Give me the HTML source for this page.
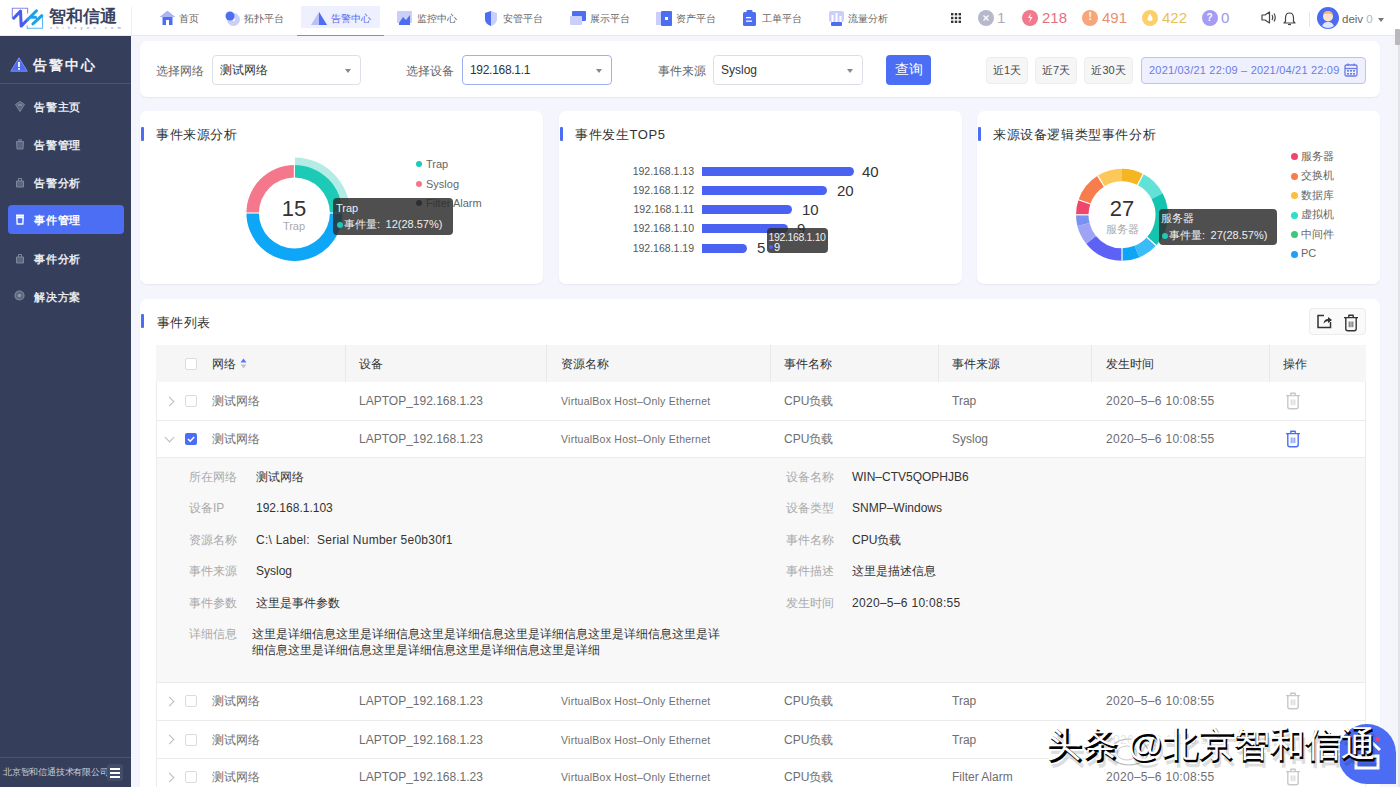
<!DOCTYPE html>
<html><head><meta charset="utf-8">
<style>
*{box-sizing:border-box;margin:0;padding:0}
html,body{width:1400px;height:787px;overflow:hidden}
body{font-family:"Liberation Sans",sans-serif;background:#f4f5fd;position:relative;color:#333}
.abs{position:absolute}
.hdr{left:0;top:0;width:1400px;height:35px;background:#fff}
.side{left:0;top:36px;width:131px;height:751px;background:#353f5b}
.card{position:absolute;background:#fff;border-radius:7px;box-shadow:0 1px 2px rgba(0,0,0,0.06)}
.t{position:absolute;white-space:nowrap;line-height:1}
.nav{position:absolute;top:1px;height:35px;font-size:10.2px;color:#666;line-height:35px;white-space:nowrap}
.menu{position:absolute;left:34px;font-size:11px;letter-spacing:0.8px;color:#e9ebf0;font-weight:bold;line-height:1;white-space:nowrap}
.sel{position:absolute;top:55px;height:30px;border:1px solid #dcdfe6;border-radius:4px;background:#fff;font-size:12px;color:#333;line-height:29px;padding-left:7px}
.caret{position:absolute;right:9px;top:13px;width:0;height:0;border-left:3.5px solid transparent;border-right:3.5px solid transparent;border-top:4px solid #888}
.lbl{position:absolute;top:64.5px;font-size:12px;color:#666;line-height:1}
.qb{position:absolute;top:57px;height:27px;background:#f6f6f7;border:1px solid #ededed;border-radius:4px;font-size:11px;color:#4a4a4a;line-height:25px;text-align:center}
.ttl{position:absolute;font-size:13px;letter-spacing:0.6px;color:#333;line-height:1;white-space:nowrap;font-weight:500}
.bar{position:absolute;width:3px;height:14px;background:#4c6ef5;border-radius:1px}
.th{position:absolute;font-size:12px;font-weight:500;color:#333;line-height:1;white-space:nowrap}
.td{position:absolute;font-size:12px;color:#6e6e6e;line-height:1;white-space:nowrap}
.dl{position:absolute;font-size:12px;color:#aaa;line-height:1;white-space:nowrap}
.dv{position:absolute;font-size:12px;color:#333;line-height:1;white-space:nowrap}
.hl{position:absolute;left:156px;width:1210px;height:1px;background:#ebebeb}
.cb{position:absolute;left:185px;width:12px;height:12px;border:1px solid #dcdcdc;border-radius:2px;background:#fff}
.chev{position:absolute;left:166px;width:7px;height:7px;border-right:1px solid #bbb;border-top:1px solid #bbb;transform:rotate(45deg)}
</style></head><body>
<!-- header -->
<div class="abs hdr"></div>
<div class="abs" style="left:131px;top:7px;width:1px;height:28px;background:#eee"></div>
<div class="abs" style="left:0;top:35px;width:1400px;height:1px;background:#e8e9f0"></div>


<!-- logo -->
<svg class="abs" style="left:8px;top:4px" width="40" height="28" viewBox="8 4 40 28">
 <path d="M12.3 18.2 V8.3 H27.6 V13.6" fill="none" stroke="#8a86ee" stroke-width="1.1"/>
 <path d="M42.5 15.7 V28.2 H27.2 V25.4" fill="none" stroke="#58b8ef" stroke-width="1.1"/>
 <path d="M13.7 18.2 L20.5 11.1 L21.2 26.1 L27.9 19.3" fill="none" stroke="#4a5cf0" stroke-width="3" stroke-linejoin="round" stroke-linecap="round"/>
 <path d="M27.9 19.3 L36.5 10.8 M32.9 23.9 L41.8 15.7 M31 17.3 H35.5" fill="none" stroke="#1aa3ea" stroke-width="3" stroke-linecap="round"/>
</svg>
<div class="t" style="left:49px;top:8px;font-size:17px;font-weight:bold;color:#3b4260;letter-spacing:0px">智和信通</div>
<div class="t" style="left:50px;top:26px;font-size:4px;color:#7b83e8;letter-spacing:4.2px">zhiheyou.com</div>

<!-- nav -->
<svg class="abs" style="left:160px;top:11px" width="15" height="14" viewBox="0 0 15 14"><path d="M7.5 0 L15 6 L12.5 6 L12.5 14 L2.5 14 L2.5 6 L0 6 Z" fill="#4e6ef2"/><path d="M7.5 0 L15 6 L0 6 Z" fill="#aab6f7"/><rect x="6" y="9" width="3" height="5" fill="#fff"/></svg>
<div class="nav" style="left:179px">首页</div>
<svg class="abs" style="left:225px;top:11px" width="15" height="15" viewBox="0 0 15 15"><circle cx="8.5" cy="8.5" r="6.5" fill="#c9cffa"/><circle cx="5" cy="5" r="4.5" fill="#4e6ef2"/><path d="M8 10 L10 8" stroke="#fff" stroke-width="1.2"/></svg>
<div class="nav" style="left:244px">拓扑平台</div>
<div class="abs" style="left:301px;top:6px;width:79px;height:22px;background:#eff0fd"></div>
<div class="abs" style="left:297px;top:34.5px;width:87px;height:1.5px;background:#5b9fda"></div>
<svg class="abs" style="left:311px;top:12px" width="16" height="13" viewBox="0 0 16 13"><path d="M8 0 L16 13 L0 13 Z" fill="#b7c0f8"/><path d="M8 0 L16 13 L8 13 Z" fill="#4e6ef2"/></svg>
<div class="nav" style="left:331px;color:#5568ef">告警中心</div>
<svg class="abs" style="left:397px;top:11px" width="15" height="14" viewBox="0 0 15 14"><rect x="0" y="0" width="15" height="12" rx="1" fill="#c9cffa"/><path d="M2 12 L6 6 L9 9 L13 4 L13 14 L2 14 Z" fill="#4e6ef2"/></svg>
<div class="nav" style="left:417px">监控中心</div>
<svg class="abs" style="left:484px;top:11px" width="14" height="15" viewBox="0 0 14 15"><path d="M1 2 L7 0 L13 2 L13 8 Q13 13 7 15 Q1 13 1 8 Z" fill="#c9cffa"/><path d="M1 2 L7 0 L7 15 Q1 13 1 8 Z" fill="#4e6ef2"/></svg>
<div class="nav" style="left:503px">安管平台</div>
<svg class="abs" style="left:570px;top:11px" width="16" height="14" viewBox="0 0 16 14"><rect x="2" y="0" width="14" height="10" rx="1" fill="#4e6ef2"/><rect x="0" y="5" width="12" height="9" rx="1" fill="#c9cffa"/></svg>
<div class="nav" style="left:590px">展示平台</div>
<svg class="abs" style="left:656px;top:11px" width="16" height="15" viewBox="0 0 16 15"><rect x="0" y="1" width="10" height="13" fill="#c9cffa"/><rect x="5" y="0" width="11" height="15" rx="1" fill="#4e6ef2"/><rect x="9" y="6" width="3" height="3" fill="#fff"/></svg>
<div class="nav" style="left:676px">资产平台</div>
<svg class="abs" style="left:743px;top:10px" width="13" height="16" viewBox="0 0 13 16"><rect x="0" y="2" width="13" height="14" rx="1.5" fill="#4e6ef2"/><rect x="3.5" y="0" width="6" height="3" rx="1" fill="#4e6ef2"/><rect x="3" y="7" width="5" height="1.3" fill="#fff"/><rect x="3" y="10.5" width="6" height="1.3" fill="#fff"/></svg>
<div class="nav" style="left:762px">工单平台</div>
<svg class="abs" style="left:829px;top:11px" width="15" height="15" viewBox="0 0 15 15"><rect x="0" y="0" width="15" height="11" rx="2" fill="#c9cffa"/><rect x="2.5" y="4" width="2" height="7" fill="#fff"/><rect x="6.5" y="2" width="2" height="9" fill="#fff"/><rect x="10.5" y="5" width="2" height="6" fill="#fff"/><rect x="2" y="11" width="11" height="4" rx="1" fill="#4e6ef2"/></svg>
<div class="nav" style="left:848px">流量分析</div>

<!-- right header -->
<svg class="abs" style="left:951px;top:13px" width="10" height="10" viewBox="0 0 10 10" fill="#333"><rect x="0" y="0" width="2.4" height="2.4"/><rect x="3.8" y="0" width="2.4" height="2.4"/><rect x="7.6" y="0" width="2.4" height="2.4"/><rect x="0" y="3.8" width="2.4" height="2.4"/><rect x="3.8" y="3.8" width="2.4" height="2.4"/><rect x="7.6" y="3.8" width="2.4" height="2.4"/><rect x="0" y="7.6" width="2.4" height="2.4"/><rect x="3.8" y="7.6" width="2.4" height="2.4"/><rect x="7.6" y="7.6" width="2.4" height="2.4"/></svg>
<div class="abs" style="left:978px;top:9.5px;width:16px;height:16px;border-radius:50%;background:#b7b8cb"></div>
<svg class="abs" style="left:982px;top:13.5px" width="8" height="8"><path d="M1.5 1.5 L6.5 6.5 M6.5 1.5 L1.5 6.5" stroke="#fff" stroke-width="1.3"/></svg>
<div class="t" style="left:997px;top:9.5px;font-size:15px;color:#a9abbd">1</div>
<div class="abs" style="left:1022px;top:9.5px;width:16px;height:16px;border-radius:50%;background:#f07a8c"></div>
<svg class="abs" style="left:1026px;top:12.5px" width="8" height="10"><path d="M5 0 L2 5 L4.5 5 L3 10 L6.5 4 L4 4 Z" fill="#fff"/></svg>
<div class="t" style="left:1042px;top:9.5px;font-size:15px;color:#e46f83">218</div>
<div class="abs" style="left:1082px;top:9.5px;width:16px;height:16px;border-radius:50%;background:#f7a67b"></div>
<div class="t" style="left:1088.5px;top:12px;font-size:10px;color:#fff;font-weight:bold">!</div>
<div class="t" style="left:1102px;top:9.5px;font-size:15px;color:#e49272">491</div>
<div class="abs" style="left:1142px;top:9.5px;width:16px;height:16px;border-radius:50%;background:#fbd06a"></div>
<svg class="abs" style="left:1146px;top:13px" width="8" height="9"><path d="M4 0.5 Q7 5 6.5 7 Q4 9 1.5 7 Q1 5 4 0.5Z" fill="#fff"/></svg>
<div class="t" style="left:1162px;top:9.5px;font-size:15px;color:#e8bf58">422</div>
<div class="abs" style="left:1202px;top:9.5px;width:16px;height:16px;border-radius:50%;background:#a59cf4"></div>
<div class="t" style="left:1206.5px;top:12.5px;font-size:10px;color:#fff;font-weight:bold">?</div>
<div class="t" style="left:1221px;top:9.5px;font-size:15px;color:#9d97e6">0</div>
<svg class="abs" style="left:1261px;top:11px" width="15" height="13" viewBox="0 0 15 13"><path d="M1 4 L4 4 L8.5 1 L8.5 12 L4 9 L1 9 Z" fill="none" stroke="#444" stroke-width="1.2" stroke-linejoin="round"/><path d="M11 4 Q12.5 6.5 11 9 M13 2.5 Q15.5 6.5 13 10.5" fill="none" stroke="#444" stroke-width="1.2"/></svg>
<svg class="abs" style="left:1283px;top:12px" width="13" height="14" viewBox="0 0 13 14"><path d="M6.5 1 Q10.5 1 10.5 6 L10.5 9.5 L12 11 L1 11 L2.5 9.5 L2.5 6 Q2.5 1 6.5 1 Z" fill="none" stroke="#444" stroke-width="1.2" stroke-linejoin="round"/><path d="M5 12.5 L8 12.5" stroke="#444" stroke-width="1.2"/></svg>
<div class="abs" style="left:1309px;top:12px;width:1px;height:15px;background:#e6e6e6"></div>
<svg class="abs" style="left:1317px;top:7px" width="22" height="22" viewBox="0 0 22 22"><circle cx="11" cy="11" r="11" fill="#4b6cf2"/><circle cx="11" cy="9.5" r="5" fill="#fde3cf"/><path d="M6 8 Q7 3.5 11 4 Q15 3.5 16 8 Q13 6 11 6.5 Q8 6 6 8Z" fill="#f3b46c"/><path d="M5 19 Q7 14.5 11 15 Q15 14.5 17 19 Q11 23 5 19Z" fill="#dfe6ff"/></svg>
<div class="t" style="left:1342px;top:13.5px;font-size:11.5px;color:#666">deiv <span style="color:#a9b6c9">0</span></div>
<div class="abs" style="left:1378px;top:18px;width:0;height:0;border-left:3.5px solid transparent;border-right:3.5px solid transparent;border-top:4px solid #777"></div>
<!-- scrollbar -->
<div class="abs" style="left:1391px;top:36px;width:9px;height:751px;background:#f4f5fb"></div>
<div class="abs" style="left:1398px;top:36px;width:2px;height:751px;background:#e3e4ea"></div>
<div class="abs" style="left:1395px;top:29px;width:5px;height:16px;background:#b9b9bd;border-radius:1px"></div>

<!-- sidebar -->

<div class="abs side"></div>
<svg class="abs" style="left:10px;top:57px" width="18" height="15" viewBox="0 0 18 15"><path d="M9 0.8 L17.2 14.2 L0.8 14.2 Z" fill="#4d6cf0" stroke="#7b8ff5" stroke-width="1" stroke-linejoin="round"/><rect x="8.1" y="5" width="1.8" height="5" fill="#fff"/><rect x="8.1" y="11" width="1.8" height="1.8" fill="#fff"/></svg>
<div class="t" style="left:33px;top:57.5px;font-size:14px;color:#eef0f5;letter-spacing:2px;font-weight:bold">告警中心</div>
<div class="abs" style="left:0;top:83px;width:131px;height:1px;background:#4a5573"></div>
<svg class="abs" style="left:15px;top:101px" width="10" height="11" viewBox="0 0 10 11"><path d="M5 0.5 L9.5 3.5 L5 10.5 L0.5 3.5 Z" fill="#5d667e" stroke="#7d869b" stroke-width="1"/><path d="M3 4 L7 4" stroke="#9aa2b4"/></svg>
<div class="menu" style="top:102px">告警主页</div>
<svg class="abs" style="left:15px;top:139px" width="10" height="11" viewBox="0 0 10 11"><path d="M1.5 2.5 L8.5 2.5 L8 10 L2 10 Z" fill="#5d667e" stroke="#7d869b" stroke-width="1"/><path d="M3 1 H7" stroke="#7d869b" stroke-width="1.2"/></svg>
<div class="menu" style="top:140px">告警管理</div>
<svg class="abs" style="left:15px;top:177px" width="10" height="11" viewBox="0 0 10 11"><path d="M1.5 4 L8.5 4 L8.5 10 L1.5 10 Z" fill="#5d667e" stroke="#7d869b" stroke-width="1"/><path d="M3.5 4 L3.5 1.5 L6.5 1.5 L6.5 4" fill="none" stroke="#7d869b" stroke-width="1"/></svg>
<div class="menu" style="top:178px">告警分析</div>
<div class="abs" style="left:8px;top:205px;width:116px;height:29px;background:#4c6ef5;border-radius:4px"></div>
<svg class="abs" style="left:15px;top:214px" width="10" height="11" viewBox="0 0 10 11"><path d="M1.8 3.5 L8.2 3.5 L7.8 10 L2.2 10 Z" fill="none" stroke="#fff" stroke-width="1.4"/><rect x="1" y="0.5" width="8" height="2.2" rx="0.5" fill="#fff"/></svg>
<div class="menu" style="top:215px;color:#fff">事件管理</div>
<svg class="abs" style="left:15px;top:253px" width="10" height="11" viewBox="0 0 10 11"><path d="M1.5 4 L8.5 4 L8.5 10 L1.5 10 Z" fill="#5d667e" stroke="#7d869b" stroke-width="1"/><path d="M3.5 4 L3.5 1.5 L6.5 1.5 L6.5 4" fill="none" stroke="#7d869b" stroke-width="1"/></svg>
<div class="menu" style="top:254px">事件分析</div>
<svg class="abs" style="left:14px;top:290px" width="11" height="11" viewBox="0 0 11 11"><circle cx="5.5" cy="5.5" r="4.5" fill="#5d667e" stroke="#7d869b" stroke-width="1.2"/><circle cx="5.5" cy="5.5" r="1.8" fill="#8e96a8"/></svg>
<div class="menu" style="top:292px">解决方案</div>
<div class="abs" style="left:0;top:757px;width:131px;height:1px;background:#4a5573"></div>
<div class="t" style="left:3px;top:768px;font-size:9px;color:#c9ccd6;letter-spacing:-0.2px">北京智和信通技术有限公司</div>
<div class="abs" style="left:107px;top:764px;width:16px;height:17px;background:#434d69;border-radius:3px"></div>
<div class="abs" style="left:110px;top:768px;width:10px;height:2px;background:#fff"></div>
<div class="abs" style="left:110px;top:772px;width:10px;height:2px;background:#fff"></div>
<div class="abs" style="left:110px;top:776px;width:10px;height:2px;background:#fff"></div>


<!-- filter card -->

<div class="card" style="left:140px;top:41px;width:1240px;height:56px"></div>
<div class="lbl" style="left:156px">选择网络</div>
<div class="sel" style="left:212px;width:149px">测试网络<div class="caret"></div></div>
<div class="lbl" style="left:406px">选择设备</div>
<div class="sel" style="left:462px;width:150px;border-color:#9fb0f2;letter-spacing:-0.3px">192.168.1.1<div class="caret"></div></div>
<div class="lbl" style="left:658px">事件来源</div>
<div class="sel" style="left:713px;width:150px">Syslog<div class="caret"></div></div>
<div class="abs" style="left:886px;top:55px;width:45px;height:30px;background:#4c6ef5;border-radius:4px;color:#fff;font-size:13.5px;line-height:30px;text-align:center;font-weight:500">查询</div>
<div class="qb" style="left:986px;width:42px">近1天</div>
<div class="qb" style="left:1035px;width:42px">近7天</div>
<div class="qb" style="left:1084px;width:49px">近30天</div>
<div class="abs" style="left:1141px;top:57px;width:225px;height:27px;background:#eef0fe;border:1px solid #b9c3f7;border-radius:4px;font-size:11px;color:#6b7ce6;line-height:25px;padding-left:7px;white-space:nowrap;letter-spacing:0.2px">2021/03/21 22:09 – 2021/04/21 22:09</div>
<svg class="abs" style="left:1344px;top:63px" width="14" height="14" viewBox="0 0 14 14"><rect x="1" y="2" width="12" height="11" rx="1.5" fill="none" stroke="#6b7ce6" stroke-width="1.3"/><path d="M1 5.5 H13" stroke="#6b7ce6" stroke-width="1.3"/><path d="M4 0.5 V3 M10 0.5 V3" stroke="#6b7ce6" stroke-width="1.3"/><g fill="#6b7ce6"><rect x="3" y="7" width="2" height="1.6"/><rect x="6" y="7" width="2" height="1.6"/><rect x="9" y="7" width="2" height="1.6"/><rect x="3" y="10" width="2" height="1.6"/><rect x="6" y="10" width="2" height="1.6"/><rect x="9" y="10" width="2" height="1.6"/></g></svg>

<!-- chart cards -->

<div class="card" style="left:140px;top:111px;width:403px;height:173px"></div>
<div class="bar" style="left:140.5px;top:127px"></div>
<div class="ttl" style="left:156px;top:128px">事件来源分析</div>
<svg class="abs" style="left:140px;top:111px" width="403" height="173" viewBox="140 111 403 173">
<path d="M294.98 157.40 A55.6 55.6 0 0 1 350.00 213.00 L341.90 213.00 A47.5 47.5 0 0 0 294.90 165.50 Z" fill="#b3ece4"/>
<path d="M294.40 165.00 A48 48 0 0 1 342.40 213.00 L329.90 213.00 A35.5 35.5 0 0 0 294.40 177.50 Z" fill="#1ccab6"/>
<path d="M342.40 213.00 A48 48 0 0 1 246.40 213.00 L258.90 213.00 A35.5 35.5 0 0 0 329.90 213.00 Z" fill="#0ea6f7"/>
<path d="M246.40 213.00 A48 48 0 0 1 294.40 165.00 L294.40 177.50 A35.5 35.5 0 0 0 258.90 213.00 Z" fill="#f5778b"/>
<path d="M294.40 178.50 L294.40 157.00" stroke="#fff" stroke-width="1.1"/>
<path d="M328.90 213.00 L343.40 213.00" stroke="#fff" stroke-width="1.1"/>
<path d="M259.90 213.00 L245.40 213.00" stroke="#fff" stroke-width="1.1"/>
</svg>
<div class="t" style="left:281px;top:197.5px;font-size:22px;color:#333;width:26px;text-align:center">15</div>
<div class="t" style="left:280px;top:221px;font-size:11px;color:#aaa;width:28px;text-align:center">Trap</div>
<div class="abs" style="left:416px;top:161px;width:6px;height:6px;border-radius:50%;background:#1ccab6"></div>
<div class="t" style="left:426px;top:159px;font-size:11px;color:#666">Trap</div>
<div class="abs" style="left:416px;top:180.5px;width:6px;height:6px;border-radius:50%;background:#f5778b"></div>
<div class="t" style="left:426px;top:178.5px;font-size:11px;color:#666">Syslog</div>
<div class="abs" style="left:416px;top:200px;width:6px;height:6px;border-radius:50%;background:#1b3a5c"></div>
<div class="t" style="left:426px;top:198px;font-size:11px;color:#666">Filter Alarm</div>
<div class="abs" style="left:333px;top:198px;width:120px;height:37px;background:rgba(45,45,45,0.84);border-radius:4px"></div>
<div class="t" style="left:336px;top:203px;font-size:11px;color:#eee">Trap</div>
<div class="abs" style="left:337px;top:222px;width:6px;height:6px;border-radius:50%;background:#1ccab6"></div>
<div class="t" style="left:344px;top:219px;font-size:11px;color:#eee">事件量:<span style="margin-left:5.5px">12(28.57%)</span></div>
<div class="card" style="left:559px;top:111px;width:403px;height:173px"></div>
<div class="bar" style="left:559.5px;top:127px"></div>
<div class="ttl" style="left:575px;top:128px">事件发生TOP5</div>
<div class="t" style="left:600px;top:166px;width:94px;text-align:right;font-size:10.5px;color:#555">192.168.1.13</div>
<div class="t" style="left:600px;top:185px;width:94px;text-align:right;font-size:10.5px;color:#555">192.168.1.12</div>
<div class="t" style="left:600px;top:204px;width:94px;text-align:right;font-size:10.5px;color:#555">192.168.1.11</div>
<div class="t" style="left:600px;top:223px;width:94px;text-align:right;font-size:10.5px;color:#555">192.168.1.10</div>
<div class="t" style="left:600px;top:242.5px;width:94px;text-align:right;font-size:10.5px;color:#555">192.168.1.19</div>
<div class="abs" style="left:702px;top:167px;width:152px;height:9px;background:#4a62f2;border-radius:0 4.5px 4.5px 0"></div>
<div class="abs" style="left:702px;top:185.5px;width:125px;height:9px;background:#4a62f2;border-radius:0 4.5px 4.5px 0"></div>
<div class="abs" style="left:702px;top:205px;width:90px;height:9px;background:#4a62f2;border-radius:0 4.5px 4.5px 0"></div>
<div class="abs" style="left:702px;top:224px;width:86px;height:9px;background:#4a62f2;border-radius:0 4.5px 4.5px 0"></div>
<div class="abs" style="left:702px;top:243.5px;width:45px;height:9px;background:#4a62f2;border-radius:0 4.5px 4.5px 0"></div>
<div class="t" style="left:862px;top:163.5px;font-size:15px;color:#333">40</div>
<div class="t" style="left:837px;top:182.5px;font-size:15px;color:#333">20</div>
<div class="t" style="left:802px;top:201.5px;font-size:15px;color:#333">10</div>
<div class="t" style="left:797px;top:220.5px;font-size:15px;color:#333">9</div>
<div class="t" style="left:757px;top:240px;font-size:15px;color:#333">5</div>
<div class="abs" style="left:767px;top:228px;width:61px;height:25px;background:rgba(45,45,45,0.84);border-radius:4px"></div>
<div class="t" style="left:768.5px;top:231.5px;font-size:10.5px;color:#eee;letter-spacing:-0.35px">192.168.1.10</div>
<div class="abs" style="left:769px;top:245px;width:4px;height:4px;border-radius:50%;background:#4a62f2"></div>
<div class="t" style="left:774px;top:242px;font-size:11px;color:#fff">9</div>

<div class="card" style="left:977px;top:111px;width:403px;height:173px"></div>
<div class="bar" style="left:977.5px;top:127px"></div>
<div class="ttl" style="left:993px;top:128px">来源设备逻辑类型事件分析</div>
<svg class="abs" style="left:977px;top:111px" width="403" height="173" viewBox="977 111 403 173">
<path d="M1122.00 168.80 A46 46 0 0 1 1143.24 174.00 L1137.47 185.09 A33.5 33.5 0 0 0 1122.00 181.30 Z" fill="#f6b621"/>
<path d="M1143.24 174.00 A46 46 0 0 1 1162.62 193.20 L1151.58 199.07 A33.5 33.5 0 0 0 1137.47 185.09 Z" fill="#62e2d6"/>
<path d="M1162.62 193.20 A46 46 0 0 1 1156.18 245.58 L1146.90 237.22 A33.5 33.5 0 0 0 1151.58 199.07 Z" fill="#15c4b0"/>
<path d="M1156.18 245.58 A46 46 0 0 1 1139.23 257.45 L1134.55 245.86 A33.5 33.5 0 0 0 1146.90 237.22 Z" fill="#3bbcf8"/>
<path d="M1139.23 257.45 A46 46 0 0 1 1122.00 260.80 L1122.00 248.30 A33.5 33.5 0 0 0 1134.55 245.86 Z" fill="#0ea5f6"/>
<path d="M1122.00 260.80 A46 46 0 0 1 1086.25 243.75 L1095.97 235.88 A33.5 33.5 0 0 0 1122.00 248.30 Z" fill="#5d61f6"/>
<path d="M1086.25 243.75 A46 46 0 0 1 1077.37 225.93 L1089.50 222.90 A33.5 33.5 0 0 0 1095.97 235.88 Z" fill="#9ea3f6"/>
<path d="M1077.37 225.93 A46 46 0 0 1 1076.00 214.80 L1088.50 214.80 A33.5 33.5 0 0 0 1089.50 222.90 Z" fill="#7892f3"/>
<path d="M1076.00 214.80 A46 46 0 0 1 1078.51 199.82 L1090.33 203.89 A33.5 33.5 0 0 0 1088.50 214.80 Z" fill="#f0466b"/>
<path d="M1078.51 199.82 A46 46 0 0 1 1097.62 175.79 L1104.25 186.39 A33.5 33.5 0 0 0 1090.33 203.89 Z" fill="#f77d4c"/>
<path d="M1097.62 175.79 A46 46 0 0 1 1122.00 168.80 L1122.00 181.30 A33.5 33.5 0 0 0 1104.25 186.39 Z" fill="#fcc85a"/>
<path d="M1137.01 185.97 L1143.70 173.11" stroke="#fff" stroke-width="1.2"/>
<path d="M1146.15 236.55 L1156.93 246.25" stroke="#fff" stroke-width="1.2"/>
<path d="M1122.00 247.30 L1122.00 261.80" stroke="#fff" stroke-width="1.2"/>
<path d="M1089.50 214.80 L1075.00 214.80" stroke="#fff" stroke-width="1.2"/>
<path d="M1091.27 204.22 L1077.56 199.50" stroke="#fff" stroke-width="1.2"/>
<path d="M1104.78 187.24 L1097.09 174.94" stroke="#fff" stroke-width="1.2"/>
</svg>
<div class="t" style="left:1108px;top:198px;font-size:22px;color:#333;width:28px;text-align:center">27</div>
<div class="t" style="left:1104px;top:224px;font-size:11px;color:#aaa;width:36px;text-align:center">服务器</div>
<div class="abs" style="left:1290.5px;top:153px;width:7px;height:7px;border-radius:50%;background:#f0466b"></div>
<div class="t" style="left:1301px;top:150.5px;font-size:11px;color:#666">服务器</div>
<div class="abs" style="left:1290.5px;top:172.5px;width:7px;height:7px;border-radius:50%;background:#f77d4c"></div>
<div class="t" style="left:1301px;top:170px;font-size:11px;color:#666">交换机</div>
<div class="abs" style="left:1290.5px;top:192px;width:7px;height:7px;border-radius:50%;background:#fcbf3a"></div>
<div class="t" style="left:1301px;top:189.5px;font-size:11px;color:#666">数据库</div>
<div class="abs" style="left:1290.5px;top:211.5px;width:7px;height:7px;border-radius:50%;background:#2edfc9"></div>
<div class="t" style="left:1301px;top:209px;font-size:11px;color:#666">虚拟机</div>
<div class="abs" style="left:1290.5px;top:231px;width:7px;height:7px;border-radius:50%;background:#3dc77b"></div>
<div class="t" style="left:1301px;top:228.5px;font-size:11px;color:#666">中间件</div>
<div class="abs" style="left:1290.5px;top:250.5px;width:7px;height:7px;border-radius:50%;background:#1ba2f6"></div>
<div class="t" style="left:1301px;top:248px;font-size:11px;color:#666">PC</div>
<div class="abs" style="left:1159px;top:209px;width:118px;height:36px;background:rgba(45,45,45,0.84);border-radius:4px"></div>
<div class="t" style="left:1161px;top:213px;font-size:11px;color:#eee">服务器</div>
<div class="abs" style="left:1162px;top:233px;width:6px;height:6px;border-radius:50%;background:#1ccab6"></div>
<div class="t" style="left:1169px;top:230px;font-size:11px;color:#eee">事件量:<span style="margin-left:5.5px">27(28.57%)</span></div>


<!-- list card -->
<div class="card" style="left:140px;top:299px;width:1240px;height:500px"></div>
<div class="bar" style="left:140.5px;top:314px"></div>
<div class="ttl" style="left:156.5px;top:316px;font-weight:500">事件列表</div>
<div class="abs" style="left:1309px;top:308px;width:57px;height:27px;border:1px solid #ececec;border-radius:4px;background:#fafafa"></div>
<svg class="abs" style="left:1317px;top:314px" width="16" height="16" viewBox="0 0 16 16"><path d="M7 1.5 H1 V13.5 H13.5 V8" fill="none" stroke="#333" stroke-width="1.5"/><path d="M6.5 9.5 Q7 5 11 5 V3 L15 6 L11 9 V7 Q8.5 7 6.5 9.5Z" fill="#333"/></svg>
<svg class="abs" style="left:1343px;top:314px" width="16" height="18" viewBox="0 0 16 18"><path d="M5.8 3 V1.3 H10.2 V3 M1 3.6 H15 M2.8 3.6 V14.8 Q2.8 16.8 4.8 16.8 H11.2 Q13.2 16.8 13.2 14.8 V3.6" fill="none" stroke="#333" stroke-width="1.4" stroke-linejoin="round"/><path d="M6.2 7.5 V13.2 M8 7.5 V13.2 M9.8 7.5 V13.2" stroke="#333" stroke-width="0.8"/></svg>
<div class="abs" style="left:156px;top:345px;width:1210px;height:37px;background:#f6f6f7"></div>
<div class="abs" style="left:345px;top:345px;width:1px;height:37px;background:#e8e8e8"></div>
<div class="abs" style="left:546px;top:345px;width:1px;height:37px;background:#e8e8e8"></div>
<div class="abs" style="left:770px;top:345px;width:1px;height:37px;background:#e8e8e8"></div>
<div class="abs" style="left:938px;top:345px;width:1px;height:37px;background:#e8e8e8"></div>
<div class="abs" style="left:1091px;top:345px;width:1px;height:37px;background:#e8e8e8"></div>
<div class="abs" style="left:1269px;top:345px;width:1px;height:37px;background:#e8e8e8"></div>
<div class="cb" style="top:358px"></div>
<div class="th" style="left:211.5px;top:358px">网络</div>
<svg class="abs" style="left:240px;top:358px" width="7" height="11" viewBox="0 0 7 11"><path d="M0.5 4.5 L3.5 0.5 L6.5 4.5Z" fill="#5b76f2"/><path d="M0.5 6.5 L3.5 10.5 L6.5 6.5Z" fill="#c4c4c4"/></svg>
<div class="th" style="left:359px;top:358px">设备</div>
<div class="th" style="left:561px;top:358px">资源名称</div>
<div class="th" style="left:784px;top:358px">事件名称</div>
<div class="th" style="left:952px;top:358px">事件来源</div>
<div class="th" style="left:1106px;top:358px">发生时间</div>
<div class="th" style="left:1283px;top:358px">操作</div>
<div class="abs" style="left:156px;top:382px;width:1px;height:420px;background:#ebebeb"></div>
<div class="abs" style="left:1365px;top:382px;width:1px;height:420px;background:#ebebeb"></div>
<div class="chev" style="top:397.5px"></div>
<div class="cb" style="top:395px"></div>
<div class="td" style="left:211.5px;top:395px">测试网络</div>
<div class="td" style="left:359px;top:395px">LAPTOP_192.168.1.23</div>
<div class="td" style="left:561px;top:396px;font-size:10.5px;letter-spacing:0.25px">VirtualBox Host–Only Ethernet</div>
<div class="td" style="left:784px;top:395px">CPU负载</div>
<div class="td" style="left:952px;top:395px">Trap</div>
<div class="td" style="left:1106px;top:395px;letter-spacing:0.3px">2020–5–6 10:08:55</div>
<svg class="abs" style="left:1285px;top:392px" width="16" height="18" viewBox="0 0 16 18"><path d="M5.8 3 V1.3 H10.2 V3 M1 3.6 H15 M2.8 3.6 V14.8 Q2.8 16.8 4.8 16.8 H11.2 Q13.2 16.8 13.2 14.8 V3.6" fill="none" stroke="#c8c8c8" stroke-width="1.4" stroke-linejoin="round"/><path d="M6.2 7.5 V13.2 M8 7.5 V13.2 M9.8 7.5 V13.2" stroke="#c8c8c8" stroke-width="0.8"/></svg>
<div class="hl" style="top:419.5px"></div>
<div class="abs" style="left:166px;top:433.5px;width:7px;height:7px;border-right:1px solid #bbb;border-bottom:1px solid #bbb;transform:rotate(45deg)"></div>
<div class="abs" style="left:185px;top:432.5px;width:12px;height:12px;border-radius:2px;background:#4c6ef5"></div>
<svg class="abs" style="left:185px;top:432.5px" width="12" height="12"><path d="M3 6 L5.2 8.2 L9.2 4" fill="none" stroke="#fff" stroke-width="1.5"/></svg>
<div class="td" style="left:211.5px;top:432.5px">测试网络</div>
<div class="td" style="left:359px;top:432.5px">LAPTOP_192.168.1.23</div>
<div class="td" style="left:561px;top:433.5px;font-size:10.5px;letter-spacing:0.25px">VirtualBox Host–Only Ethernet</div>
<div class="td" style="left:784px;top:432.5px">CPU负载</div>
<div class="td" style="left:952px;top:432.5px">Syslog</div>
<div class="td" style="left:1106px;top:432.5px;letter-spacing:0.3px">2020–5–6 10:08:55</div>
<svg class="abs" style="left:1285px;top:429.5px" width="16" height="18" viewBox="0 0 16 18"><path d="M5.8 3 V1.3 H10.2 V3 M1 3.6 H15 M2.8 3.6 V14.8 Q2.8 16.8 4.8 16.8 H11.2 Q13.2 16.8 13.2 14.8 V3.6" fill="none" stroke="#4c6ef5" stroke-width="1.4" stroke-linejoin="round"/><path d="M6.2 7.5 V13.2 M8 7.5 V13.2 M9.8 7.5 V13.2" stroke="#4c6ef5" stroke-width="0.8"/></svg>
<div class="hl" style="top:457px"></div>
<div class="abs" style="left:157px;top:458px;width:1208px;height:224px;background:#f8f8f8"></div>
<div class="hl" style="top:682px"></div>
<div class="dl" style="left:189px;top:471px">所在网络</div>
<div class="dv" style="left:256px;top:471px">测试网络</div>
<div class="dl" style="left:189px;top:502px">设备IP</div>
<div class="dv" style="left:256px;top:502px">192.168.1.103</div>
<div class="dl" style="left:189px;top:533.5px">资源名称</div>
<div class="dv" style="left:256px;top:533.5px;letter-spacing:0.25px">C:\ Label:&nbsp; Serial Number 5e0b30f1</div>
<div class="dl" style="left:189px;top:565px">事件来源</div>
<div class="dv" style="left:256px;top:565px">Syslog</div>
<div class="dl" style="left:189px;top:596.5px">事件参数</div>
<div class="dv" style="left:256px;top:596.5px">这里是事件参数</div>
<div class="dl" style="left:786px;top:471px">设备名称</div>
<div class="dv" style="left:852px;top:471px">WIN–CTV5QOPHJB6</div>
<div class="dl" style="left:786px;top:502px">设备类型</div>
<div class="dv" style="left:852px;top:502px">SNMP–Windows</div>
<div class="dl" style="left:786px;top:533.5px">事件名称</div>
<div class="dv" style="left:852px;top:533.5px">CPU负载</div>
<div class="dl" style="left:786px;top:565px">事件描述</div>
<div class="dv" style="left:852px;top:565px">这里是描述信息</div>
<div class="dl" style="left:786px;top:596.5px">发生时间</div>
<div class="dv" style="left:852px;top:596.5px;letter-spacing:0.3px">2020–5–6 10:08:55</div>
<div class="dl" style="left:189px;top:628px">详细信息</div>
<div class="dv" style="left:251.5px;top:628px">这里是详细信息这里是详细信息这里是详细信息这里是详细信息这里是详细信息这里是详</div>
<div class="dv" style="left:251.5px;top:644px">细信息这里是详细信息这里是详细信息这里是详细信息这里是详细</div>
<div class="chev" style="top:697.5px"></div>
<div class="cb" style="top:695px"></div>
<div class="td" style="left:211.5px;top:695px">测试网络</div>
<div class="td" style="left:359px;top:695px">LAPTOP_192.168.1.23</div>
<div class="td" style="left:561px;top:696px;font-size:10.5px;letter-spacing:0.25px">VirtualBox Host–Only Ethernet</div>
<div class="td" style="left:784px;top:695px">CPU负载</div>
<div class="td" style="left:952px;top:695px">Trap</div>
<div class="td" style="left:1106px;top:695px;letter-spacing:0.3px">2020–5–6 10:08:55</div>
<svg class="abs" style="left:1285px;top:692px" width="16" height="18" viewBox="0 0 16 18"><path d="M5.8 3 V1.3 H10.2 V3 M1 3.6 H15 M2.8 3.6 V14.8 Q2.8 16.8 4.8 16.8 H11.2 Q13.2 16.8 13.2 14.8 V3.6" fill="none" stroke="#c8c8c8" stroke-width="1.4" stroke-linejoin="round"/><path d="M6.2 7.5 V13.2 M8 7.5 V13.2 M9.8 7.5 V13.2" stroke="#c8c8c8" stroke-width="0.8"/></svg>
<div class="hl" style="top:720px"></div>
<div class="chev" style="top:736.0px"></div>
<div class="cb" style="top:733.5px"></div>
<div class="td" style="left:211.5px;top:733.5px">测试网络</div>
<div class="td" style="left:359px;top:733.5px">LAPTOP_192.168.1.23</div>
<div class="td" style="left:561px;top:734.5px;font-size:10.5px;letter-spacing:0.25px">VirtualBox Host–Only Ethernet</div>
<div class="td" style="left:784px;top:733.5px">CPU负载</div>
<div class="td" style="left:952px;top:733.5px">Trap</div>
<div class="td" style="left:1106px;top:733.5px;letter-spacing:0.3px">2020–5–6 10:08:55</div>
<svg class="abs" style="left:1285px;top:730.5px" width="16" height="18" viewBox="0 0 16 18"><path d="M5.8 3 V1.3 H10.2 V3 M1 3.6 H15 M2.8 3.6 V14.8 Q2.8 16.8 4.8 16.8 H11.2 Q13.2 16.8 13.2 14.8 V3.6" fill="none" stroke="#c8c8c8" stroke-width="1.4" stroke-linejoin="round"/><path d="M6.2 7.5 V13.2 M8 7.5 V13.2 M9.8 7.5 V13.2" stroke="#c8c8c8" stroke-width="0.8"/></svg>
<div class="hl" style="top:758px"></div>
<div class="chev" style="top:773.5px"></div>
<div class="cb" style="top:771px"></div>
<div class="td" style="left:211.5px;top:771px">测试网络</div>
<div class="td" style="left:359px;top:771px">LAPTOP_192.168.1.23</div>
<div class="td" style="left:561px;top:772px;font-size:10.5px;letter-spacing:0.25px">VirtualBox Host–Only Ethernet</div>
<div class="td" style="left:784px;top:771px">CPU负载</div>
<div class="td" style="left:952px;top:771px">Filter Alarm</div>
<div class="td" style="left:1106px;top:771px;letter-spacing:0.3px">2020–5–6 10:08:55</div>
<svg class="abs" style="left:1285px;top:768px" width="16" height="18" viewBox="0 0 16 18"><path d="M5.8 3 V1.3 H10.2 V3 M1 3.6 H15 M2.8 3.6 V14.8 Q2.8 16.8 4.8 16.8 H11.2 Q13.2 16.8 13.2 14.8 V3.6" fill="none" stroke="#c8c8c8" stroke-width="1.4" stroke-linejoin="round"/><path d="M6.2 7.5 V13.2 M8 7.5 V13.2 M9.8 7.5 V13.2" stroke="#c8c8c8" stroke-width="0.8"/></svg>


<!-- float button -->
<div class="abs" style="left:1338px;top:724px;width:58px;height:60px;background:#4b6cf3;border-radius:29px 29px 0 29px"></div>
<svg class="abs" style="left:1346px;top:730px" width="42" height="44" viewBox="0 0 42 44"><path d="M8 20 L21 8 L34 20" fill="none" stroke="#fff" stroke-width="3"/><path d="M10 26 H32 V38 H10 Z" fill="none" stroke="#fff" stroke-width="3"/><circle cx="32" cy="9" r="2.2" fill="#f0466b"/></svg>
<!-- watermark -->
<div class="abs" style="left:1085px;top:726px;width:255px;height:40px;background:rgba(255,255,255,0.82)"></div>
<svg class="abs" style="left:1105px;top:722px" width="60" height="48" viewBox="0 0 60 48"><ellipse cx="24" cy="30" rx="19" ry="13" fill="none" stroke="#bbb" stroke-width="1.2"/><ellipse cx="22" cy="31" rx="10" ry="7" fill="none" stroke="#ccc" stroke-width="1"/><path d="M40 8 Q52 10 50 24" fill="none" stroke="#ccc" stroke-width="1.2"/></svg>
<div class="t" style="left:1050px;top:733px;font-size:35px;color:rgba(0,0,0,0.13);font-weight:bold;letter-spacing:0.55px;filter:blur(0.6px)">头条 @北京智和信通</div>
<div class="t" style="left:1048px;top:727.5px;font-size:35px;color:#000;font-weight:bold;letter-spacing:0.55px">头条 @北京智和信通</div>
<div class="t" style="left:1046px;top:725.5px;font-size:35px;color:#fff;font-weight:normal;letter-spacing:0.55px">头条 @北京智和信通</div>
</body></html>
